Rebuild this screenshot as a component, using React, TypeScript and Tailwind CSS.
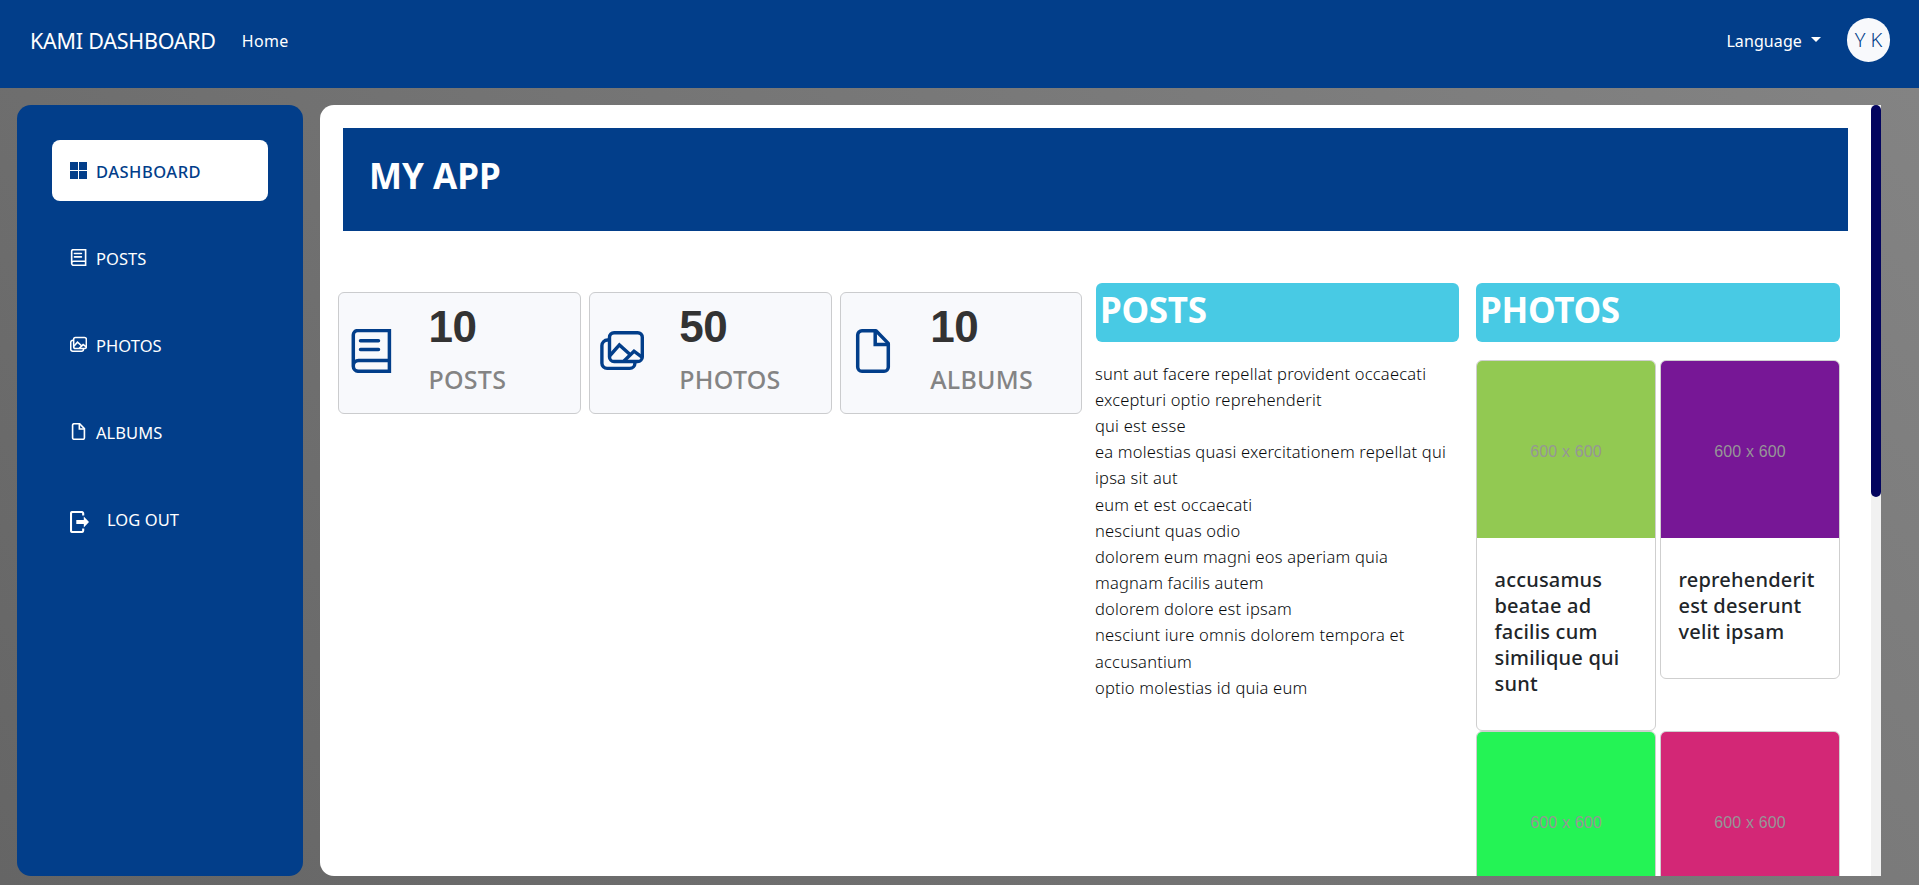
import type { ReactNode } from "react";

type IconProps = { className?: string };

function BookIcon({ className }: IconProps) {
  return (
    <svg viewBox="0 0 44 44" fill="none" stroke="currentColor" className={className}>
      <path d="M4.3 37V6a4.3 4.3 0 0 1 4.3-4.4h31.8v40.7H9.6a5.35 5.35 0 0 1 0-10.7h30.8" />
      <path strokeLinecap="round" d="M11.5 11.7h18M11.5 20.4h18" />
    </svg>
  );
}

function ImagesIcon({ className }: IconProps) {
  return (
    <svg viewBox="0 0 44 44" fill="none" stroke="currentColor" strokeLinejoin="round" className={className}>
      <rect x="9.5" y="3.7" width="32.8" height="28.8" rx="4.6" />
      <path d="M9 11H7.6a5.6 5.6 0 0 0-5.7 5.6v17.6a5.2 5.2 0 0 0 5.2 5.2h22.6a5.2 5.2 0 0 0 5.2-5.2V33" />
      <path strokeLinejoin="miter" d="M10 26.5l9.4-10.6 11.2 10M24 32l10-9.8 8.3 6.2" />
    </svg>
  );
}

function FileIcon({ className }: IconProps) {
  return (
    <svg viewBox="0 0 44 44" fill="none" stroke="currentColor" strokeLinejoin="round" className={className}>
      <path d="M25 1.8H11a4.3 4.3 0 0 0-4.3 4.3v31.8a4.3 4.3 0 0 0 4.3 4.3h22a4.3 4.3 0 0 0 4.3-4.3V14.4L25 1.8z" />
      <path strokeLinejoin="miter" d="M24.2 2v13.5h13" />
    </svg>
  );
}

function GridIcon({ className }: IconProps) {
  return (
    <svg viewBox="0 0 17 17" fill="currentColor" className={className}>
      <path d="M0 0h8v8H0zM9 0h8v8H9zM0 9h8v8H0zM9 9h8v8H9z" />
    </svg>
  );
}

function LogoutIcon({ className }: IconProps) {
  return (
    <svg viewBox="0 0 19 22" className={className}>
      <path fill="none" stroke="currentColor" strokeWidth="2.1" d="M13.2 4.4V2.6A1.6 1.6 0 0 0 11.6 1H2.4A1.4 1.4 0 0 0 1 2.4v17.2A1.4 1.4 0 0 0 2.4 21h9.2a1.6 1.6 0 0 0 1.6-1.6v-1.8" />
      <path fill="currentColor" d="M6.3 9.1h7.5V5.4L19 11l-5.2 5.6v-3.7H6.3z" />
    </svg>
  );
}

function NavItem({ icon, label, active = false }: { icon: ReactNode; label: string; active?: boolean }) {
  return (
    <li
      className={
        active
          ? "flex h-[61px] items-center gap-2 rounded-lg bg-white pl-[18px] font-medium tracking-[0.5px] text-[#023e8a]"
          : "flex h-[61px] items-center gap-2 rounded-lg pl-[18px] tracking-[0.05px] text-white"
      }
    >
      {icon}
      <span className="pt-1 pl-px">{label}</span>
    </li>
  );
}

function StatCard({ icon, value, label }: { icon: ReactNode; value: number; label: string }) {
  return (
    <div className="flex h-[122px] flex-1 items-stretch rounded-md border border-[#cbccce] bg-[#f8f9fc]">
      <div className="flex w-[89.5px] items-center pb-1 pl-2.5 text-[#023e8a]">{icon}</div>
      <div className="flex flex-col gap-[13px] pt-2.5">
        <span className="font-['Liberation_Sans',sans-serif] text-[44px] leading-[48px] font-bold tracking-[-0.5px] text-[#333333]">{value}</span>
        <span className="text-[25px] leading-[30px] font-medium tracking-[0.25px] text-[#848484]">{label}</span>
      </div>
    </div>
  );
}

function SectionTitle({ children }: { children: ReactNode }) {
  return (
    <h2 className="h-[59px] rounded-md bg-[#48cae4] pt-[6px] pl-1 text-[35px] leading-[42px] font-bold tracking-[-0.3px] text-white">
      {children}
    </h2>
  );
}

function PhotoCard({ color, title }: { color: string; title?: string }) {
  return (
    <div className="rounded-md border border-[#cfcfcf] bg-white">
      <div className={`flex h-[177px] items-center justify-center rounded-t-[5px] pt-1 font-['Liberation_Sans',sans-serif] text-base tracking-[0.15px] text-[#969696] ${color}`}>
        600 x 600
      </div>
      {title && (
        <h3 className="pt-[29px] pr-4 pb-[33px] pl-[17.5px] text-[20px] leading-[26px] font-medium tracking-[0.2px] text-[#212529]">{title}</h3>
      )}
    </div>
  );
}

const posts = [
  "sunt aut facere repellat provident occaecati excepturi optio reprehenderit",
  "qui est esse",
  "ea molestias quasi exercitationem repellat qui ipsa sit aut",
  "eum et est occaecati",
  "nesciunt quas odio",
  "dolorem eum magni eos aperiam quia",
  "magnam facilis autem",
  "dolorem dolore est ipsam",
  "nesciunt iure omnis dolorem tempora et accusantium",
  "optio molestias id quia eum",
];

const photos = [
  { color: "bg-[#92c952]", title: "accusamus beatae ad facilis cum similique qui sunt" },
  { color: "bg-[#771796]", title: "reprehenderit est deserunt velit ipsam" },
  { color: "bg-[#24f355]" },
  { color: "bg-[#d32776]" },
];

export default function App() {
  return (
    <div className="flex h-[885px] flex-col overflow-hidden bg-linear-[45deg,#656565,#848484] font-['Noto_Sans',sans-serif]">
      <header className="flex h-[88px] shrink-0 items-center bg-[#023e8a] pr-[29px] pb-[7px] pl-[30px] text-white">
        <span className="pt-px text-[21.5px] tracking-[-0.25px]">KAMI DASHBOARD</span>
        <span className="ml-[26px] text-base tracking-[0.3px]">Home</span>
        <div className="ml-auto flex items-center">
          <span className="text-base tracking-[0.1px]">Language</span>
          <svg viewBox="0 0 10 5" className="mb-0.5 ml-[9px] h-[5px] w-2.5" fill="currentColor">
            <path d="M0 0h10L5 5z" />
          </svg>
          <span className="mb-px ml-[26px] flex h-11 w-[43px] items-center justify-center rounded-full bg-[#f8f9fc] text-[20px] font-light tracking-[-0.1px] text-[#023e8a]">
            Y K
          </span>
        </div>
      </header>

      <div className="flex min-h-0 flex-1 gap-[17px] pt-[17px] pr-[38px] pb-[9px] pl-[17px]">
        <nav className="w-[286px] shrink-0 rounded-[14px] bg-[#023e8a] px-[35px] pt-[35px]">
          <ul className="flex flex-col gap-[26px] text-[16.5px]">
            <NavItem active icon={<GridIcon className="size-[17px]" />} label="DASHBOARD" />
            <NavItem icon={<BookIcon className="size-[17px] stroke-[4.2]" />} label="POSTS" />
            <NavItem icon={<ImagesIcon className="size-[17px] stroke-[4]" />} label="PHOTOS" />
            <NavItem icon={<FileIcon className="size-[17px] stroke-[4.2]" />} label="ALBUMS" />
            <NavItem icon={<LogoutIcon className="mt-[7px] mr-[9px] h-[22px] w-[19px]" />} label="LOG OUT" />
          </ul>
        </nav>

        <main className="flex min-w-0 flex-1 overflow-hidden rounded-l-[14px] bg-white">
          <div className="flex min-w-0 flex-1 flex-col gap-[52px] overflow-hidden pt-[23px]">
            <div className="mx-[23px] h-[103px] shrink-0 bg-[#023e8a] pt-[27px] pl-[26px]">
              <h1 className="text-[35px] leading-[42px] font-bold text-white">MY APP</h1>
            </div>

            <div className="flex items-start pr-[31px] pl-[18px]">
              <section className="mt-[9px] mr-[13.5px] flex w-[744.5px] shrink-0 gap-2">
                <StatCard icon={<BookIcon className="size-11 stroke-[3.5]" />} value={10} label="POSTS" />
                <StatCard icon={<ImagesIcon className="size-11 stroke-[3.4]" />} value={50} label="PHOTOS" />
                <StatCard icon={<FileIcon className="size-11 stroke-[3.5]" />} value={10} label="ALBUMS" />
              </section>

              <section className="mr-[17px] w-[363px] shrink-0">
                <SectionTitle>POSTS</SectionTitle>
                <div className="pt-[18.8px] pr-1.5 text-[16.5px] leading-[26.16px] font-light tracking-[0.2px] text-[#080a0c]">
                  {posts.map((post) => (
                    <p key={post} className="-ml-px">
                      {post}
                    </p>
                  ))}
                </div>
              </section>

              <section className="w-[364px] shrink-0">
                <SectionTitle>PHOTOS</SectionTitle>
                <div className="grid grid-cols-2 items-start gap-x-1 pt-[18px]">
                  {photos.map((photo) => (
                    <PhotoCard key={photo.color} color={photo.color} title={photo.title} />
                  ))}
                </div>
              </section>
            </div>
          </div>
          <div className="w-2.5 shrink-0 bg-[#f1f1f1]">
            <div className="h-[392px] rounded-full bg-[#03045e]" />
          </div>
        </main>
      </div>
    </div>
  );
}
